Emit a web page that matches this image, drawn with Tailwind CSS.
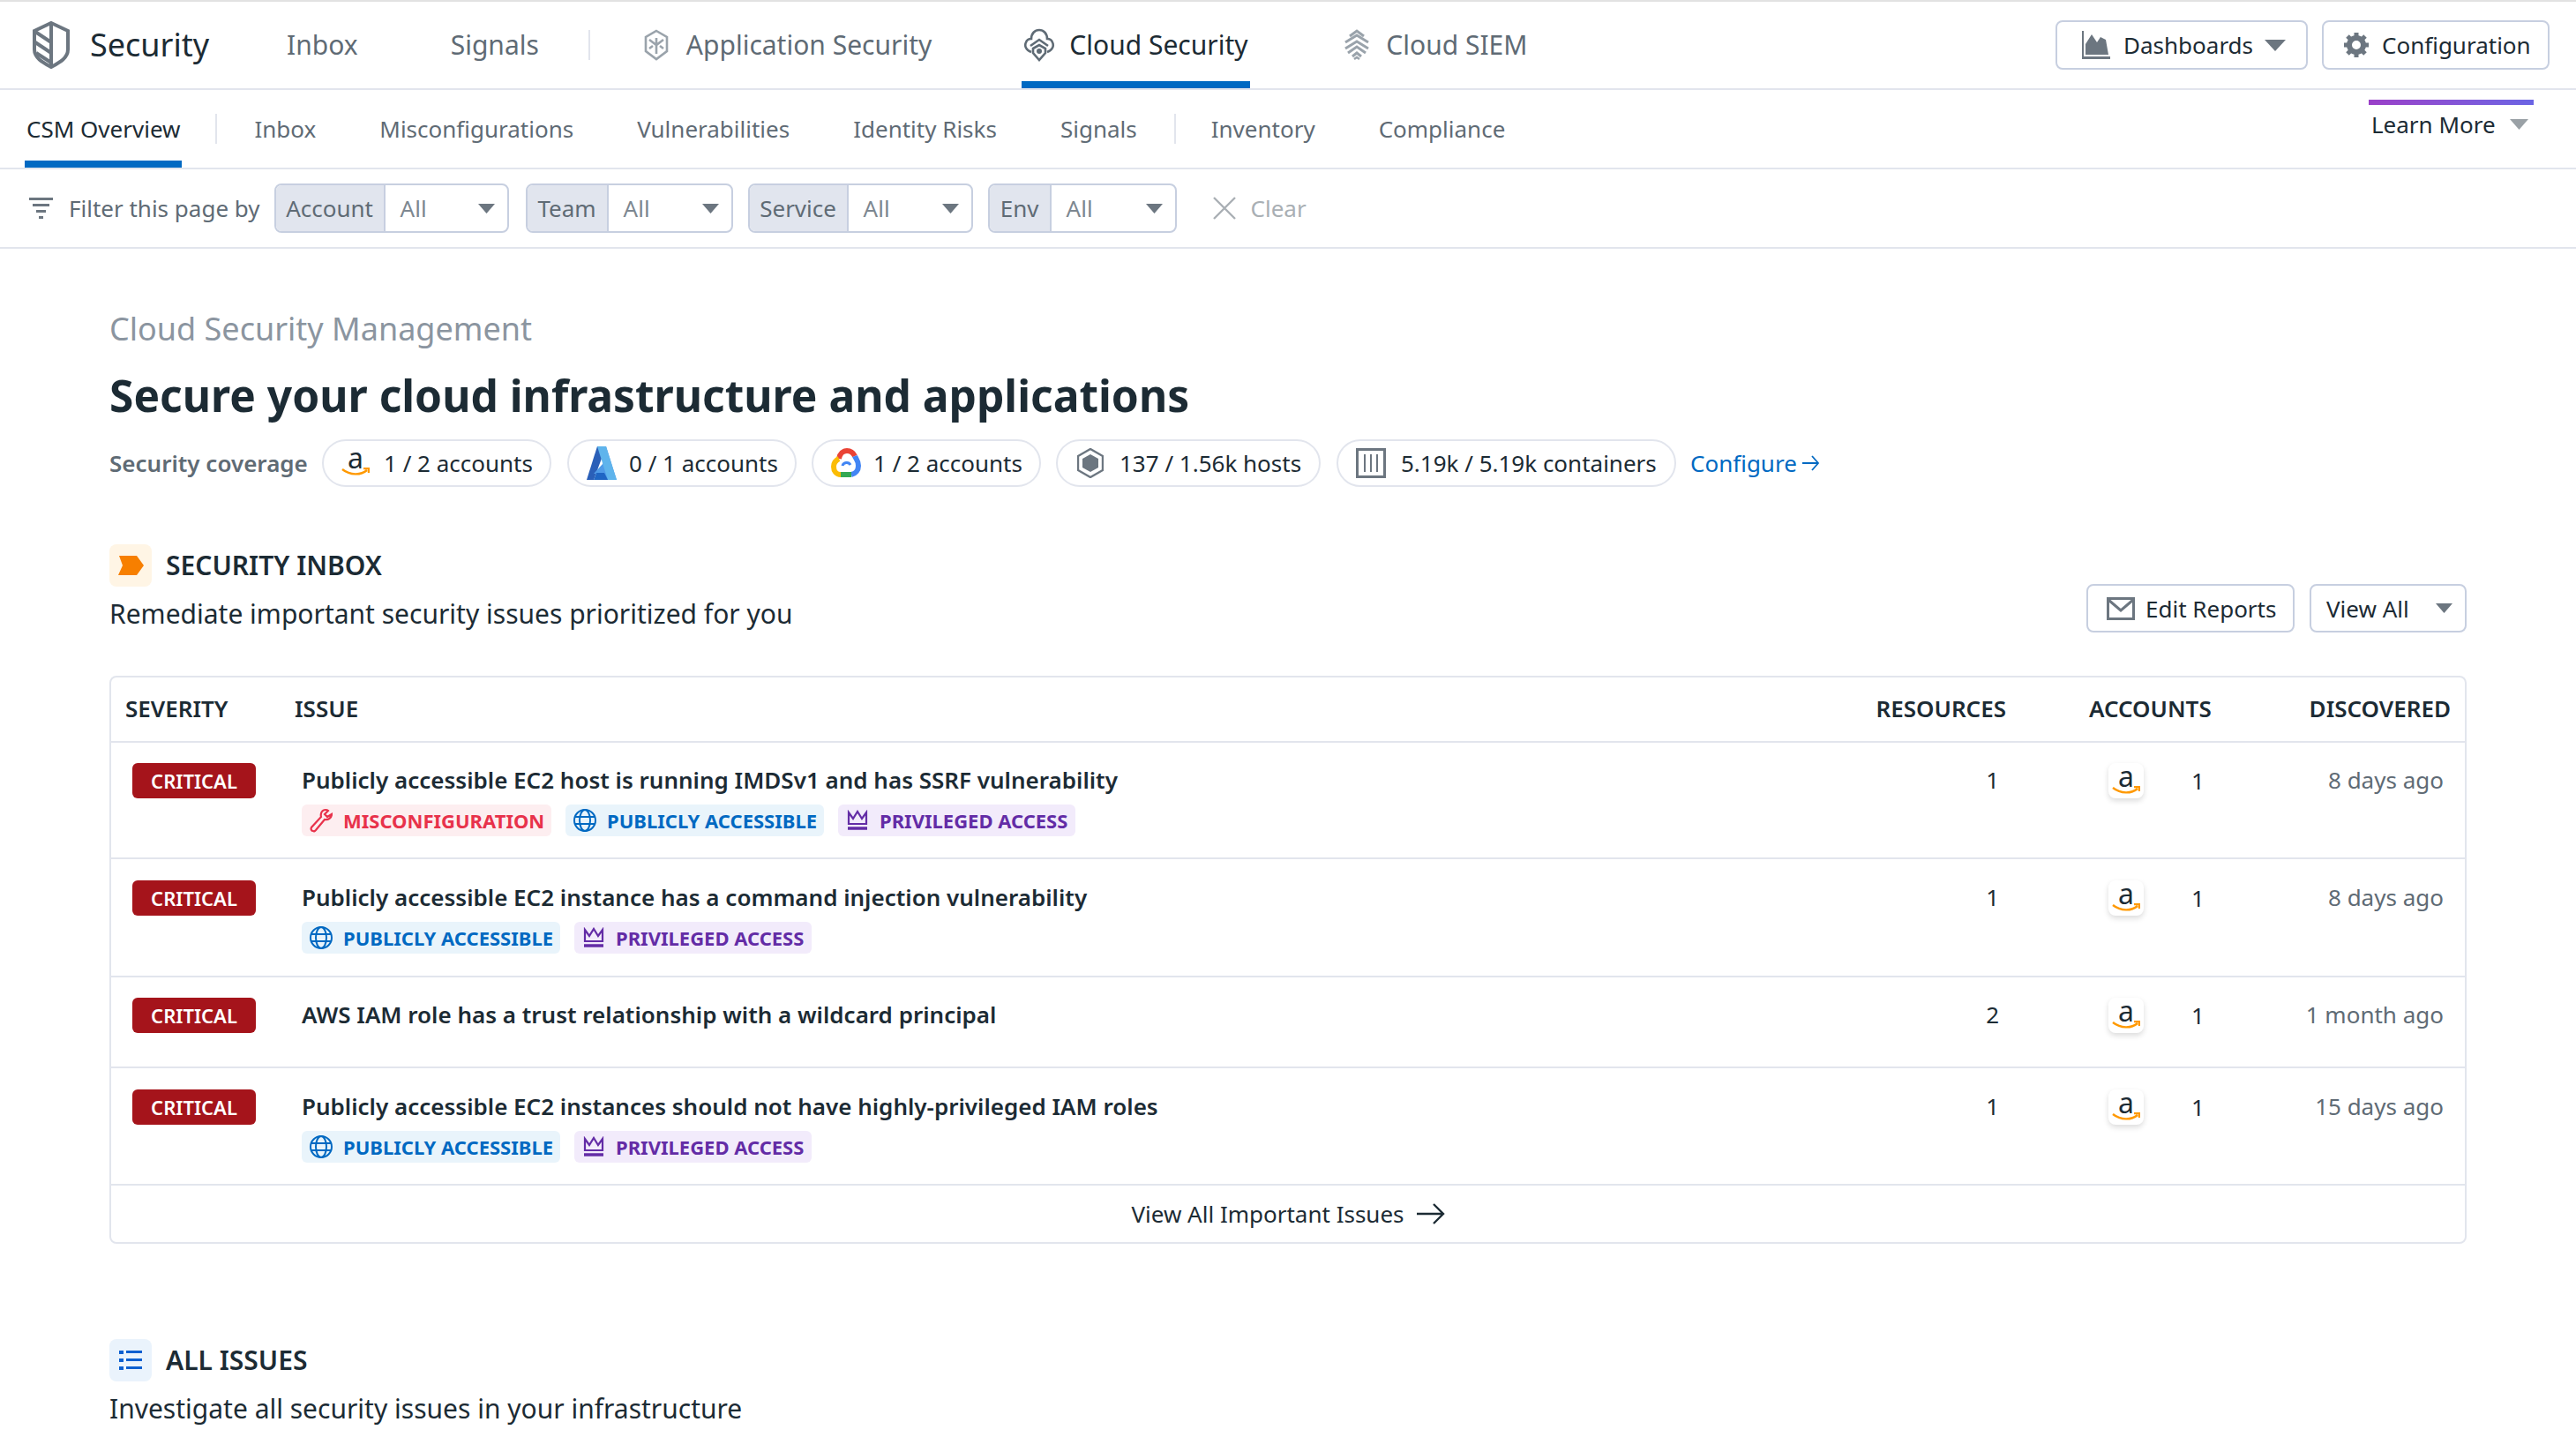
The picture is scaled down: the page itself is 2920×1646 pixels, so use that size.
<!DOCTYPE html>
<html lang="en">
<head>
<meta charset="utf-8">
<title>Cloud Security Management</title>
<script src="https://cdn.jsdelivr.net/npm/@tailwindcss/browser@4"></script>
</head>
<body class="bg-white">
<div class="w-[2920px] h-[1646px] overflow-hidden bg-white font-['Noto_Sans',sans-serif] text-[#1c2b34] text-[26px] leading-[36px]">

  <!-- top nav -->
  <header class="h-[102px] border-t-2 border-t-[#e2e2e2] border-b-2 border-b-[#e2e5ed] flex items-center pl-[37px] pr-[30px] text-[30px] text-[#5f6b75]">
    <svg class="w-[42px] h-[54px] shrink-0" viewBox="0 0 42 54" fill="none" stroke="#6c7680" stroke-width="4"><path d="M21 2 L40 11 V32 C40 42 30 47 21 52 C12 47 2 42 2 32 V11 Z"/><path d="M21 2 V52 M3 12 L21 24 M3 24 L21 36 M4 36 L21 47"/></svg>
    <span class="ml-[23px] text-[36px] text-[#1c2b34]">Security</span>
    <span class="ml-[88px]">Inbox</span>
    <span class="ml-[105px]">Signals</span>
    <span class="ml-[56px] w-[2px] h-[34px] bg-[#e2e5ed]"></span>
    <svg class="ml-[60px] w-[30px] h-[36px] shrink-0" viewBox="0 0 30 36" fill="none" stroke="#9aa3ab" stroke-width="2.6"><path d="M15 2 L27 9 V25 L15 34 L3 25 V9 Z"/><path d="M15 10 V28 M7 12 L15 18 L23 12 M7 22 L11 19 M23 22 L19 19"/></svg>
    <span class="ml-[19px]">Application Security</span>
    <div class="relative ml-[102px] h-[98px] w-[259px] flex items-center pl-[2px] text-[#1c2b34]">
      <svg class="w-[36px] h-[38px] shrink-0" viewBox="0 0 36 38" fill="none" stroke="#5f6b75" stroke-width="2.6"><path d="M9 27 C3 25 1 20 3 16 C4 13 7 12 9 12 C9 6 13 2 18 2 C23 2 27 6 27 12 C29 12 32 13 33 16 C35 20 33 25 27 27"/><path d="M8 20 L18 13 L28 20"/><path d="M11 23 L18 19 L25 23 V28 L18 36 L11 28 Z"/><circle cx="18" cy="26" r="3" fill="#5f6b75" stroke="none"/></svg>
      <span class="ml-[16px]">Cloud Security</span>
      <span class="absolute left-0 bottom-0 w-[259px] h-[8px] bg-[#0069c2]"></span>
    </div>
    <svg class="ml-[106px] w-[30px] h-[36px] shrink-0" viewBox="0 0 30 36" fill="none" stroke="#9aa3ab" stroke-width="3"><path d="M7 8 L15 2 L23 8 M2 15 L15 7 L28 15 M2 22 L15 14 L28 22 M5 27 L15 20 L25 27 M10 31 L15 27 L20 31"/><path d="M12 34 L15 32 L18 34" stroke-width="2.5"/></svg>
    <span class="ml-[18px]">Cloud SIEM</span>
    <div class="ml-auto flex gap-[16px] text-[26px] text-[#1c2b34]">
      <div class="h-[56px] w-[286px] border-2 border-[#c7cfe0] rounded-[8px] flex items-center pl-[28px]">
        <svg class="w-[32px] h-[32px] shrink-0" viewBox="0 0 32 32" fill="#6c7680"><path d="M0 0 H2 V29 H32 V32 H0 Z"/><path d="M4 27 V15 L11 4 L17 13 L21 7 L27 10 L30 27 Z"/></svg>
        <span class="ml-[15px]">Dashboards</span>
        <svg class="ml-[13px] w-[24px] h-[13px]" viewBox="0 0 24 13" fill="#6c7680"><path d="M0 0 H24 L12 13 Z"/></svg>
      </div>
      <div class="h-[56px] w-[258px] border-2 border-[#c7cfe0] rounded-[8px] flex items-center pl-[23px]">
        <svg class="w-[28px] h-[28px] shrink-0" viewBox="0 0 28 28" fill="none"><circle cx="14" cy="14" r="8" stroke="#6c7680" stroke-width="6"/><path d="M14 0 V5 M14 23 V28 M0 14 H5 M23 14 H28 M4 4 L8 8 M20 20 L24 24 M24 4 L20 8 M8 20 L4 24" stroke="#6c7680" stroke-width="5"/></svg>
        <span class="ml-[15px]">Configuration</span>
      </div>
    </div>
  </header>

  <!-- tabs -->
  <nav class="relative h-[90px] border-b-2 border-[#e2e5ed] flex items-center pl-[30px] text-[#5f6b75]">
    <div class="relative text-[#1c2b34]">CSM Overview<span class="absolute left-[-2px] top-[54px] w-[178px] h-[8px] bg-[#0069c2]"></span></div>
    <span class="ml-[40px] w-[2px] h-[34px] bg-[#e2e5ed]"></span>
    <span class="ml-[42px]">Inbox</span>
    <span class="ml-[72px]">Misconfigurations</span>
    <span class="ml-[72px]">Vulnerabilities</span>
    <span class="ml-[72px]">Identity Risks</span>
    <span class="ml-[72px]">Signals</span>
    <span class="ml-[42px] w-[2px] h-[34px] bg-[#e2e5ed]"></span>
    <span class="ml-[40px]">Inventory</span>
    <span class="ml-[72px]">Compliance</span>
    <div class="absolute left-[2685px] top-[11px] w-[187px]">
      <div class="h-[6px] bg-gradient-to-r from-[#9a3fc8] to-[#6a64e4]"></div>
      <div class="mt-[4px] flex items-center pl-[3px] text-[#1c2b34]">Learn More<svg class="ml-[16px] w-[21px] h-[12px]" viewBox="0 0 21 12" fill="#9aa1a6"><path d="M0 0 H21 L10.5 12 Z"/></svg></div>
    </div>
  </nav>

  <!-- filter -->
  <div class="h-[90px] border-b-2 border-[#e2e5ed] flex items-center pl-[33px] text-[#5f6b75]">
    <svg class="w-[27px] h-[24px] shrink-0" viewBox="0 0 27 24" fill="#6c7680"><rect x="0" y="0" width="27" height="3"/><rect x="4" y="7" width="19" height="3"/><rect x="8" y="14" width="11" height="3"/><rect x="11" y="21" width="5" height="3"/></svg>
    <span class="ml-[18px]">Filter this page by</span>
    <div class="ml-[16px] w-[266px] h-[56px] border-2 border-[#c7cfe0] rounded-[8px] overflow-hidden flex items-center">
      <span class="w-[124px] h-full bg-[#e1e5ee] border-r-2 border-[#c7cfe0] flex items-center justify-center">Account</span>
      <span class="ml-[17px] text-[#7d8790]">All</span>
      <svg class="ml-auto mr-[14px] w-[19px] h-[11px]" viewBox="0 0 19 11" fill="#6c7680"><path d="M0 0 H19 L9.5 11 Z"/></svg>
    </div>
    <div class="ml-[19px] w-[235px] h-[56px] border-2 border-[#c7cfe0] rounded-[8px] overflow-hidden flex items-center">
      <span class="w-[92px] h-full bg-[#e1e5ee] border-r-2 border-[#c7cfe0] flex items-center justify-center">Team</span>
      <span class="ml-[17px] text-[#7d8790]">All</span>
      <svg class="ml-auto mr-[14px] w-[19px] h-[11px]" viewBox="0 0 19 11" fill="#6c7680"><path d="M0 0 H19 L9.5 11 Z"/></svg>
    </div>
    <div class="ml-[17px] w-[255px] h-[56px] border-2 border-[#c7cfe0] rounded-[8px] overflow-hidden flex items-center">
      <span class="w-[112px] h-full bg-[#e1e5ee] border-r-2 border-[#c7cfe0] flex items-center justify-center">Service</span>
      <span class="ml-[17px] text-[#7d8790]">All</span>
      <svg class="ml-auto mr-[14px] w-[19px] h-[11px]" viewBox="0 0 19 11" fill="#6c7680"><path d="M0 0 H19 L9.5 11 Z"/></svg>
    </div>
    <div class="ml-[17px] w-[214px] h-[56px] border-2 border-[#c7cfe0] rounded-[8px] overflow-hidden flex items-center">
      <span class="w-[70px] h-full bg-[#e1e5ee] border-r-2 border-[#c7cfe0] flex items-center justify-center">Env</span>
      <span class="ml-[17px] text-[#7d8790]">All</span>
      <svg class="ml-auto mr-[14px] w-[19px] h-[11px]" viewBox="0 0 19 11" fill="#6c7680"><path d="M0 0 H19 L9.5 11 Z"/></svg>
    </div>
    <svg class="ml-[41px] w-[26px] h-[26px] shrink-0" viewBox="0 0 26 26" stroke="#a9afb4" stroke-width="2.4" fill="none"><path d="M1 1 L25 25 M25 1 L1 25"/></svg>
    <span class="ml-[17px] text-[#a9afb4]">Clear</span>
  </div>

  <!-- main -->
  <main class="px-[124px] pt-[66px]">
    <div class="text-[36px] leading-[50px] text-[#8b95a0]">Cloud Security Management</div>
    <h1 class="mt-[18px] text-[49.7px] leading-[64px] font-bold">Secure your cloud infrastructure and applications</h1>

    <!-- coverage -->
    <div class="mt-[18px] flex items-center text-[#1c2b34]">
      <span class="w-[241px] font-semibold text-[#5f6b75]">Security coverage</span>
      <div class="h-[54px] w-[260px] border-2 border-[#e2e5ed] rounded-full flex items-center pl-[20px]">
        <span class="relative w-[32px] h-[40px] shrink-0 flex justify-center"><span class="text-[32px] leading-[32px] -mt-[2px]">a</span><svg class="absolute left-0 bottom-[5px] w-[32px] h-[10px]" viewBox="0 0 32 10" fill="none" stroke="#f90" stroke-width="2.4"><path d="M1 2 C10 9 22 9 29 3 M25 1 H31 V6"/></svg></span>
        <span class="ml-[16px]">1 / 2 accounts</span>
      </div>
      <div class="ml-[18px] h-[54px] w-[260px] border-2 border-[#e2e5ed] rounded-full flex items-center pl-[20px]">
        <svg class="w-[34px] h-[38px] shrink-0" viewBox="0 0 34 38"><path d="M12 0 H22 L8 38 H0 Z" fill="#2a5fb8"/><path d="M22 0 L34 38 H20 L13 31 H8 L18 20 Z" fill="#4f9be8"/><path d="M12 0 H22 L34 38 H24 Z" fill="#5fb4ec"/><path d="M11 30 L20 30 L24 38 H8 Z" fill="#1f66c4"/></svg>
        <span class="ml-[14px]">0 / 1 accounts</span>
      </div>
      <div class="ml-[17px] h-[54px] w-[260px] border-2 border-[#e2e5ed] rounded-full flex items-center pl-[20px]">
        <svg class="w-[34px] h-[34px] shrink-0" viewBox="0 0 34 34" fill="none" stroke-width="6"><path d="M9 12 C10 6 14 3 18 3 C22 3 25 5 27 9" stroke="#ea4335"/><path d="M27 9 C28 12 31 14 31 20 C31 25 28 29 23 30" stroke="#4285f4"/><path d="M23 30 H11" stroke="#34a853"/><path d="M11 30 C6 30 3 26 3 21 C3 17 5 14 9 12" stroke="#fbbc05"/><path d="M13 20 C14 16 20 15 22 19" stroke="#4285f4" stroke-width="3"/></svg>
        <span class="ml-[14px]">1 / 2 accounts</span>
      </div>
      <div class="ml-[17px] h-[54px] w-[300px] border-2 border-[#e2e5ed] rounded-full flex items-center pl-[22px]">
        <svg class="w-[30px] h-[34px] shrink-0" viewBox="0 0 30 34" fill="#6c7680"><path d="M15 1 L29 9 V25 L15 33 L1 25 V9 Z" fill="none" stroke="#6c7680" stroke-width="2.4"/><path d="M15 7 L24 12 V22 L15 27 L6 22 V12 Z"/></svg>
        <span class="ml-[18px]">137 / 1.56k hosts</span>
      </div>
      <div class="ml-[18px] h-[54px] w-[385px] border-2 border-[#e2e5ed] rounded-full flex items-center pl-[20px]">
        <svg class="w-[34px] h-[34px] shrink-0" viewBox="0 0 34 34" fill="none" stroke="#6c7680"><rect x="1.5" y="1.5" width="31" height="31" stroke-width="3"/><path d="M10 7 V27 M17 7 V27 M24 7 V27" stroke-width="2"/></svg>
        <span class="ml-[17px]">5.19k / 5.19k containers</span>
      </div>
      <span class="ml-[16px] text-[#0069c2]">Configure</span>
      <svg class="ml-[6px] w-[20px] h-[20px]" viewBox="0 0 20 20" fill="none" stroke="#0069c2" stroke-width="1.8"><path d="M0 10 H18 M11 2 L18 10 L11 18"/></svg>
    </div>

    <!-- inbox section -->
    <section class="mt-[65px] flex justify-between items-end">
      <div>
        <div class="flex items-center">
          <span class="w-[48px] h-[48px] rounded-[8px] bg-[#fff5e5] flex items-center justify-center"><svg class="w-[29px] h-[22px]" viewBox="0 0 29 22" fill="#f77f00"><path d="M1 0 H21 L29 11 L21 22 H0 L5 11 Z"/></svg></span>
          <span class="ml-[16px] text-[30px] leading-[48px] font-semibold">SECURITY INBOX</span>
        </div>
        <p class="mt-[11px] mb-[1px] text-[30px] leading-[40px]">Remediate important security issues prioritized for you</p>
      </div>
      <div class="flex gap-[17px]">
        <div class="h-[55px] w-[236px] border-2 border-[#c7cfe0] rounded-[8px] flex items-center pl-[21px]">
          <svg class="w-[32px] h-[26px] shrink-0" viewBox="0 0 32 26" fill="none" stroke="#6c7680" stroke-width="3"><rect x="1.5" y="1.5" width="29" height="23"/><path d="M2 3 L16 15 L30 3"/></svg>
          <span class="ml-[12px]">Edit Reports</span>
        </div>
        <div class="h-[55px] w-[178px] border-2 border-[#c7cfe0] rounded-[8px] flex items-center pl-[17px]">
          <span>View All</span>
          <svg class="ml-auto mr-[14px] w-[19px] h-[11px]" viewBox="0 0 19 11" fill="#6c7680"><path d="M0 0 H19 L9.5 11 Z"/></svg>
        </div>
      </div>
    </section>

    <!-- table -->
    <div class="mt-[49px] w-[2672px] border-2 border-[#e2e5ed] rounded-[8px]">
      <div class="h-[74px] border-b-2 border-[#e2e5ed] flex items-center font-semibold pb-[2px]">
        <div class="w-[208px] pl-[16px] shrink-0">SEVERITY</div>
        <div class="flex-1">ISSUE</div>
        <div class="w-[160px] shrink-0 text-right">RESOURCES</div>
        <div class="w-[94px] shrink-0"></div>
        <div class="w-[138px] shrink-0">ACCOUNTS</div>
        <div class="w-[288px] shrink-0 pr-[16px] text-right">DISCOVERED</div>
      </div>

      <!-- row 1 -->
      <div class="h-[132px] border-b-2 border-[#e2e5ed] flex items-start pt-[23px]">
        <div class="w-[216px] pl-[24px] shrink-0"><span class="w-[140px] h-[40px] rounded-[6px] bg-[#a5141b] text-white text-[22px] font-semibold flex items-center justify-center">CRITICAL</span></div>
        <div class="flex-1">
          <div class="leading-[38px] font-semibold">Publicly accessible EC2 host is running IMDSv1 and has SSRF vulnerability</div>
          <div class="mt-[9px] flex gap-[16px] text-[22px] font-bold leading-[36px]">
            <span class="h-[36px] w-[283px] rounded-[6px] bg-[#fdeef0] text-[#e8324b] flex items-center pl-[9px]"><svg class="w-[26px] h-[28px] shrink-0" viewBox="0 0 26 28" fill="none" stroke="#e8324b" stroke-width="2.2"><path d="M18 2 C14 2 12 6 13 10 L2 22 C1 24 2 26 4 26 C5 27 6 26 7 25 L17 13 C21 14 25 11 25 7 L20 10 L17 7 L21 3 C20 2 19 2 18 2 Z"/></svg><span class="ml-[12px]">MISCONFIGURATION</span></span>
            <span class="h-[36px] w-[293px] rounded-[6px] bg-[#e9f4fb] text-[#0069c2] flex items-center pl-[9px]"><svg class="w-[26px] h-[26px] shrink-0" viewBox="0 0 26 26" fill="none" stroke="#0069c2" stroke-width="2"><circle cx="13" cy="13" r="12"/><ellipse cx="13" cy="13" rx="6" ry="12"/><path d="M1 9 H25 M1 17 H25"/></svg><span class="ml-[12px]">PUBLICLY ACCESSIBLE</span></span>
            <span class="h-[36px] w-[269px] rounded-[6px] bg-[#f2ebfb] text-[#632ca6] flex items-center pl-[10px]"><svg class="w-[24px] h-[24px] shrink-0" viewBox="0 0 24 24" fill="none" stroke="#632ca6" stroke-width="2.2"><path d="M2 3 L7 10 L12 2 L17 10 L22 3 V16 H2 Z"/><path d="M1 21 H23" stroke-width="3.5"/></svg><span class="ml-[13px]">PRIVILEGED ACCESS</span></span>
          </div>
        </div>
        <div class="w-[160px] shrink-0 text-right pr-[8px] leading-[38px]">1</div>
        <div class="w-[94px] shrink-0"></div>
        <div class="w-[138px] shrink-0 flex items-center pl-[22px]">
          <span class="relative w-[40px] h-[40px] rounded-[8px] bg-white shadow-[0_3px_6px_rgba(0,0,0,0.14)] flex justify-center"><span class="text-[32px] leading-[32px] -mt-[1px]">a</span><svg class="absolute left-[4px] bottom-[4px] w-[32px] h-[10px]" viewBox="0 0 32 10" fill="none" stroke="#f90" stroke-width="2.4"><path d="M1 2 C10 9 22 9 29 3 M25 1 H31 V6"/></svg></span>
          <span class="ml-[54px] leading-[38px]">1</span>
        </div>
        <div class="w-[288px] shrink-0 pr-[24px] text-right text-[#5f6b75] leading-[38px]">8 days ago</div>
      </div>

      <!-- row 2 -->
      <div class="h-[134px] border-b-2 border-[#e2e5ed] flex items-start pt-[24px]">
        <div class="w-[216px] pl-[24px] shrink-0"><span class="w-[140px] h-[40px] rounded-[6px] bg-[#a5141b] text-white text-[22px] font-semibold flex items-center justify-center">CRITICAL</span></div>
        <div class="flex-1">
          <div class="leading-[38px] font-semibold">Publicly accessible EC2 instance has a command injection vulnerability</div>
          <div class="mt-[9px] flex gap-[16px] text-[22px] font-bold leading-[36px]">
            <span class="h-[36px] w-[293px] rounded-[6px] bg-[#e9f4fb] text-[#0069c2] flex items-center pl-[9px]"><svg class="w-[26px] h-[26px] shrink-0" viewBox="0 0 26 26" fill="none" stroke="#0069c2" stroke-width="2"><circle cx="13" cy="13" r="12"/><ellipse cx="13" cy="13" rx="6" ry="12"/><path d="M1 9 H25 M1 17 H25"/></svg><span class="ml-[12px]">PUBLICLY ACCESSIBLE</span></span>
            <span class="h-[36px] w-[269px] rounded-[6px] bg-[#f2ebfb] text-[#632ca6] flex items-center pl-[10px]"><svg class="w-[24px] h-[24px] shrink-0" viewBox="0 0 24 24" fill="none" stroke="#632ca6" stroke-width="2.2"><path d="M2 3 L7 10 L12 2 L17 10 L22 3 V16 H2 Z"/><path d="M1 21 H23" stroke-width="3.5"/></svg><span class="ml-[13px]">PRIVILEGED ACCESS</span></span>
          </div>
        </div>
        <div class="w-[160px] shrink-0 text-right pr-[8px] leading-[38px]">1</div>
        <div class="w-[94px] shrink-0"></div>
        <div class="w-[138px] shrink-0 flex items-center pl-[22px]">
          <span class="relative w-[40px] h-[40px] rounded-[8px] bg-white shadow-[0_3px_6px_rgba(0,0,0,0.14)] flex justify-center"><span class="text-[32px] leading-[32px] -mt-[1px]">a</span><svg class="absolute left-[4px] bottom-[4px] w-[32px] h-[10px]" viewBox="0 0 32 10" fill="none" stroke="#f90" stroke-width="2.4"><path d="M1 2 C10 9 22 9 29 3 M25 1 H31 V6"/></svg></span>
          <span class="ml-[54px] leading-[38px]">1</span>
        </div>
        <div class="w-[288px] shrink-0 pr-[24px] text-right text-[#5f6b75] leading-[38px]">8 days ago</div>
      </div>

      <!-- row 3 -->
      <div class="h-[103px] border-b-2 border-[#e2e5ed] flex items-start pt-[23px]">
        <div class="w-[216px] pl-[24px] shrink-0"><span class="w-[140px] h-[40px] rounded-[6px] bg-[#a5141b] text-white text-[22px] font-semibold flex items-center justify-center">CRITICAL</span></div>
        <div class="flex-1 leading-[38px] font-semibold">AWS IAM role has a trust relationship with a wildcard principal</div>
        <div class="w-[160px] shrink-0 text-right pr-[8px] leading-[38px]">2</div>
        <div class="w-[94px] shrink-0"></div>
        <div class="w-[138px] shrink-0 flex items-center pl-[22px]">
          <span class="relative w-[40px] h-[40px] rounded-[8px] bg-white shadow-[0_3px_6px_rgba(0,0,0,0.14)] flex justify-center"><span class="text-[32px] leading-[32px] -mt-[1px]">a</span><svg class="absolute left-[4px] bottom-[4px] w-[32px] h-[10px]" viewBox="0 0 32 10" fill="none" stroke="#f90" stroke-width="2.4"><path d="M1 2 C10 9 22 9 29 3 M25 1 H31 V6"/></svg></span>
          <span class="ml-[54px] leading-[38px]">1</span>
        </div>
        <div class="w-[288px] shrink-0 pr-[24px] text-right text-[#5f6b75] leading-[38px]">1 month ago</div>
      </div>

      <!-- row 4 -->
      <div class="h-[133px] border-b-2 border-[#e2e5ed] flex items-start pt-[24px]">
        <div class="w-[216px] pl-[24px] shrink-0"><span class="w-[140px] h-[40px] rounded-[6px] bg-[#a5141b] text-white text-[22px] font-semibold flex items-center justify-center">CRITICAL</span></div>
        <div class="flex-1">
          <div class="leading-[38px] font-semibold">Publicly accessible EC2 instances should not have highly-privileged IAM roles</div>
          <div class="mt-[9px] flex gap-[16px] text-[22px] font-bold leading-[36px]">
            <span class="h-[36px] w-[293px] rounded-[6px] bg-[#e9f4fb] text-[#0069c2] flex items-center pl-[9px]"><svg class="w-[26px] h-[26px] shrink-0" viewBox="0 0 26 26" fill="none" stroke="#0069c2" stroke-width="2"><circle cx="13" cy="13" r="12"/><ellipse cx="13" cy="13" rx="6" ry="12"/><path d="M1 9 H25 M1 17 H25"/></svg><span class="ml-[12px]">PUBLICLY ACCESSIBLE</span></span>
            <span class="h-[36px] w-[269px] rounded-[6px] bg-[#f2ebfb] text-[#632ca6] flex items-center pl-[10px]"><svg class="w-[24px] h-[24px] shrink-0" viewBox="0 0 24 24" fill="none" stroke="#632ca6" stroke-width="2.2"><path d="M2 3 L7 10 L12 2 L17 10 L22 3 V16 H2 Z"/><path d="M1 21 H23" stroke-width="3.5"/></svg><span class="ml-[13px]">PRIVILEGED ACCESS</span></span>
          </div>
        </div>
        <div class="w-[160px] shrink-0 text-right pr-[8px] leading-[38px]">1</div>
        <div class="w-[94px] shrink-0"></div>
        <div class="w-[138px] shrink-0 flex items-center pl-[22px]">
          <span class="relative w-[40px] h-[40px] rounded-[8px] bg-white shadow-[0_3px_6px_rgba(0,0,0,0.14)] flex justify-center"><span class="text-[32px] leading-[32px] -mt-[1px]">a</span><svg class="absolute left-[4px] bottom-[4px] w-[32px] h-[10px]" viewBox="0 0 32 10" fill="none" stroke="#f90" stroke-width="2.4"><path d="M1 2 C10 9 22 9 29 3 M25 1 H31 V6"/></svg></span>
          <span class="ml-[54px] leading-[38px]">1</span>
        </div>
        <div class="w-[288px] shrink-0 pr-[24px] text-right text-[#5f6b75] leading-[38px]">15 days ago</div>
      </div>

      <!-- footer -->
      <div class="h-[64px] flex items-center justify-center">
        <span>View All Important Issues</span>
        <svg class="ml-[14px] w-[32px] h-[26px]" viewBox="0 0 32 26" fill="none" stroke="#1c2b34" stroke-width="2.4"><path d="M0 13 H30 M19 2 L30 13 L19 24"/></svg>
      </div>
    </div>

    <!-- all issues -->
    <section class="mt-[108px]">
      <div class="flex items-center">
        <span class="w-[48px] h-[48px] rounded-[8px] bg-[#eaf3fc] flex items-center justify-center"><svg class="w-[26px] h-[22px]" viewBox="0 0 26 22" fill="#0b5fd0"><rect x="0" y="0" width="5" height="4"/><rect x="8" y="0" width="18" height="3"/><rect x="0" y="9" width="5" height="4"/><rect x="8" y="9" width="18" height="3"/><rect x="0" y="18" width="5" height="4"/><rect x="8" y="18" width="18" height="3"/></svg></span>
        <span class="ml-[16px] text-[30px] leading-[48px] font-semibold">ALL ISSUES</span>
      </div>
      <p class="mt-[11px] text-[30px] leading-[40px]">Investigate all security issues in your infrastructure</p>
    </section>
  </main>
</div>
</body>
</html>
